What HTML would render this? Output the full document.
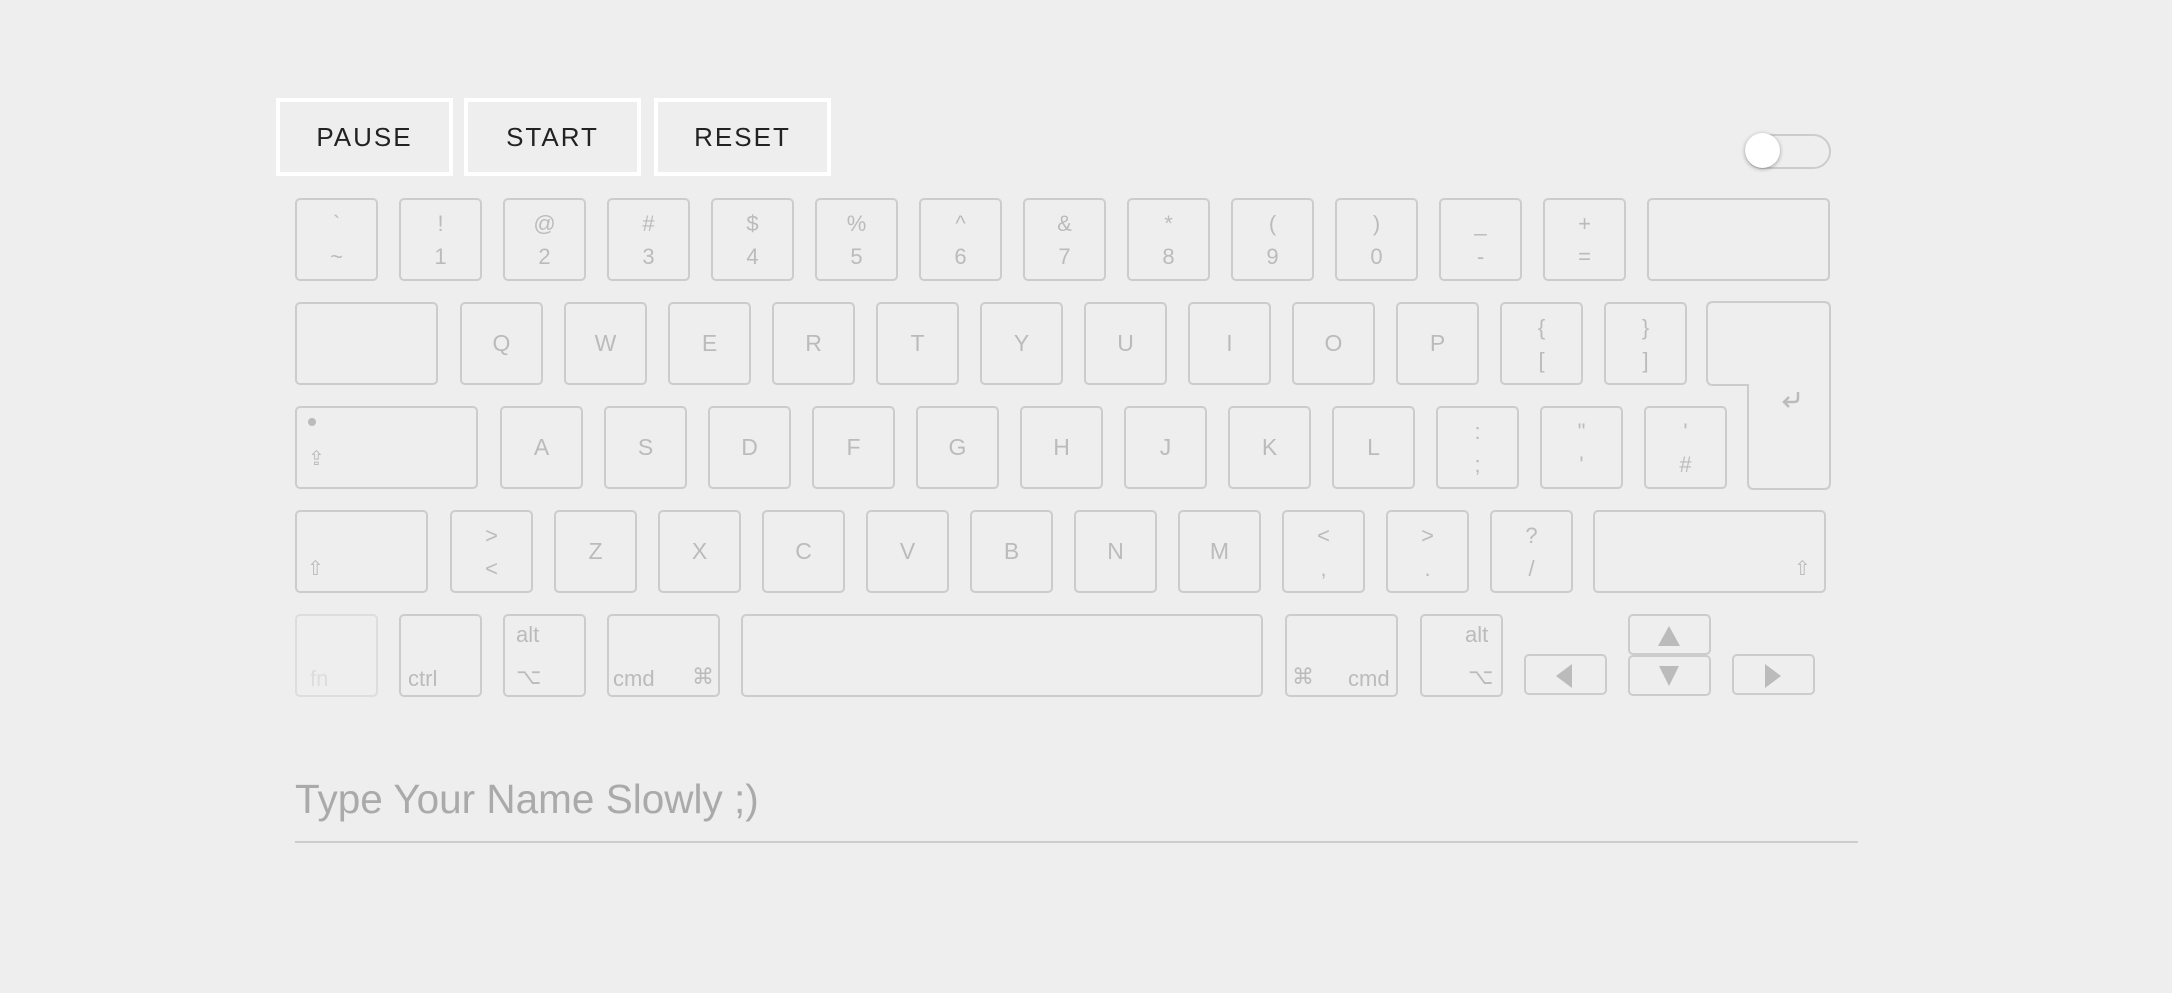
<!DOCTYPE html>
<html><head><meta charset="utf-8"><style>
body{margin:0;background:#eee;width:2172px;height:993px;position:relative;overflow:hidden;font-family:"Liberation Sans",Arial,sans-serif}
.btn{position:absolute;top:98px;height:70px;width:169px;border:4px solid #fff;color:#222;font-size:26px;letter-spacing:2px;display:flex;align-items:center;justify-content:center}
.k{position:absolute;box-sizing:border-box;border:2px solid #ccc;border-radius:5px;color:#bbb;width:83px;height:83px;display:flex;align-items:center;justify-content:center;font-size:23px}
.r1{top:198px}.r2{top:302px}.r3{top:406px}.r4{top:510px}.r5{top:614px}
.d{flex-direction:column;justify-content:center;line-height:33px;font-size:22px}
.s{position:absolute;font-size:22px;color:#bbb}
.tri{position:absolute;width:0;height:0}
</style></head><body>
<div class="btn" style="left:276px">PAUSE</div>
<div class="btn" style="left:464px">START</div>
<div class="btn" style="left:654px">RESET</div>
<div style="position:absolute;left:1745px;top:134px;width:82px;height:31px;border:2px solid #ccc;border-radius:18px"></div>
<div style="position:absolute;left:1745px;top:133px;width:35px;height:35px;border-radius:50%;background:#fff;box-shadow:0 1px 4px rgba(0,0,0,.35)"></div>

<div class="k r1 d" style="left:295px"><span>`</span><span>~</span></div>
<div class="k r1 d" style="left:399px"><span>!</span><span>1</span></div>
<div class="k r1 d" style="left:503px"><span>@</span><span>2</span></div>
<div class="k r1 d" style="left:607px"><span>#</span><span>3</span></div>
<div class="k r1 d" style="left:711px"><span>$</span><span>4</span></div>
<div class="k r1 d" style="left:815px"><span>%</span><span>5</span></div>
<div class="k r1 d" style="left:919px"><span>^</span><span>6</span></div>
<div class="k r1 d" style="left:1023px"><span>&amp;</span><span>7</span></div>
<div class="k r1 d" style="left:1127px"><span>*</span><span>8</span></div>
<div class="k r1 d" style="left:1231px"><span>(</span><span>9</span></div>
<div class="k r1 d" style="left:1335px"><span>)</span><span>0</span></div>
<div class="k r1 d" style="left:1439px"><span>_</span><span>-</span></div>
<div class="k r1 d" style="left:1543px"><span>+</span><span>=</span></div>
<div class="k r1" style="left:1647px;width:183px"></div>

<div class="k r2" style="left:295px;width:143px"></div>
<div class="k r2" style="left:460px">Q</div>
<div class="k r2" style="left:564px">W</div>
<div class="k r2" style="left:668px">E</div>
<div class="k r2" style="left:772px">R</div>
<div class="k r2" style="left:876px">T</div>
<div class="k r2" style="left:980px">Y</div>
<div class="k r2" style="left:1084px">U</div>
<div class="k r2" style="left:1188px">I</div>
<div class="k r2" style="left:1292px">O</div>
<div class="k r2" style="left:1396px">P</div>
<div class="k r2 d" style="left:1500px"><span>{</span><span>[</span></div>
<div class="k r2 d" style="left:1604px"><span>}</span><span>]</span></div>
<svg style="position:absolute;left:0;top:0" width="2172" height="993"><path d="M1713 302 H1824 Q1830 302 1830 308 V483 Q1830 489 1824 489 H1754 Q1748 489 1748 483 V385 H1713 Q1707 385 1707 379 V308 Q1707 302 1713 302 Z" fill="none" stroke="#ccc" stroke-width="2"/>
<path d="M1798 392 V398 Q1798 402 1794 402 H1784 M1789 397 L1784 402 L1789 407" fill="none" stroke="#bbb" stroke-width="2.5"/></svg>

<div class="k r3" style="left:295px;width:183px"></div>
<div style="position:absolute;left:308px;top:418px;width:8px;height:8px;border-radius:50%;background:#bbb"></div>
<div class="s" style="left:308px;top:446px;font-size:20px">⇪</div>
<div class="k r3" style="left:500px">A</div>
<div class="k r3" style="left:604px">S</div>
<div class="k r3" style="left:708px">D</div>
<div class="k r3" style="left:812px">F</div>
<div class="k r3" style="left:916px">G</div>
<div class="k r3" style="left:1020px">H</div>
<div class="k r3" style="left:1124px">J</div>
<div class="k r3" style="left:1228px">K</div>
<div class="k r3" style="left:1332px">L</div>
<div class="k r3 d" style="left:1436px"><span>:</span><span>;</span></div>
<div class="k r3 d" style="left:1540px"><span>"</span><span>'</span></div>
<div class="k r3 d" style="left:1644px"><span>'</span><span>#</span></div>

<div class="k r4" style="left:295px;width:133px"></div>
<div class="s" style="left:307px;top:556px;font-size:20px">⇧</div>
<div class="k r4 d" style="left:450px"><span>&gt;</span><span>&lt;</span></div>
<div class="k r4" style="left:554px">Z</div>
<div class="k r4" style="left:658px">X</div>
<div class="k r4" style="left:762px">C</div>
<div class="k r4" style="left:866px">V</div>
<div class="k r4" style="left:970px">B</div>
<div class="k r4" style="left:1074px">N</div>
<div class="k r4" style="left:1178px">M</div>
<div class="k r4 d" style="left:1282px"><span>&lt;</span><span>,</span></div>
<div class="k r4 d" style="left:1386px"><span>&gt;</span><span>.</span></div>
<div class="k r4 d" style="left:1490px"><span>?</span><span>/</span></div>
<div class="k r4" style="left:1593px;width:233px"></div>
<div class="s" style="left:1794px;top:556px;font-size:20px">⇧</div>

<div class="k r5" style="left:295px;border-color:#ddd"></div><div class="s" style="left:310px;top:666px;color:#ddd">fn</div>
<div class="k r5" style="left:399px"></div><div class="s" style="left:408px;top:666px">ctrl</div>
<div class="k r5" style="left:503px"></div><div class="s" style="left:516px;top:622px">alt</div><div class="s" style="left:516px;top:664px">⌥</div>
<div class="k r5" style="left:607px;width:113px"></div><div class="s" style="left:613px;top:666px">cmd</div><div class="s" style="left:692px;top:664px">⌘</div>
<div class="k r5" style="left:741px;width:522px"></div>
<div class="k r5" style="left:1285px;width:113px"></div><div class="s" style="left:1292px;top:664px">⌘</div><div class="s" style="left:1348px;top:666px">cmd</div>
<div class="k r5" style="left:1420px"></div><div class="s" style="left:1465px;top:622px">alt</div><div class="s" style="left:1468px;top:664px">⌥</div>
<div class="k" style="left:1524px;top:654px;height:41px"></div>
<div class="tri" style="left:1556px;top:664px;border-right:16px solid #bbb;border-top:12px solid transparent;border-bottom:12px solid transparent"></div>
<div class="k" style="left:1628px;top:614px;height:41px"></div>
<div class="tri" style="left:1658px;top:626px;border-bottom:20px solid #bbb;border-left:11px solid transparent;border-right:11px solid transparent"></div>
<div class="k" style="left:1628px;top:655px;height:41px"></div>
<div class="tri" style="left:1659px;top:666px;border-top:20px solid #bbb;border-left:10px solid transparent;border-right:10px solid transparent"></div>
<div class="k" style="left:1732px;top:654px;height:41px"></div>
<div class="tri" style="left:1765px;top:664px;border-left:16px solid #bbb;border-top:12px solid transparent;border-bottom:12px solid transparent"></div>

<div style="position:absolute;left:295px;top:776px;font-size:40.5px;color:#aaa">Type Your Name Slowly ;)</div>
<div style="position:absolute;left:295px;top:841px;width:1563px;height:2px;background:#ccc"></div>
</body></html>
